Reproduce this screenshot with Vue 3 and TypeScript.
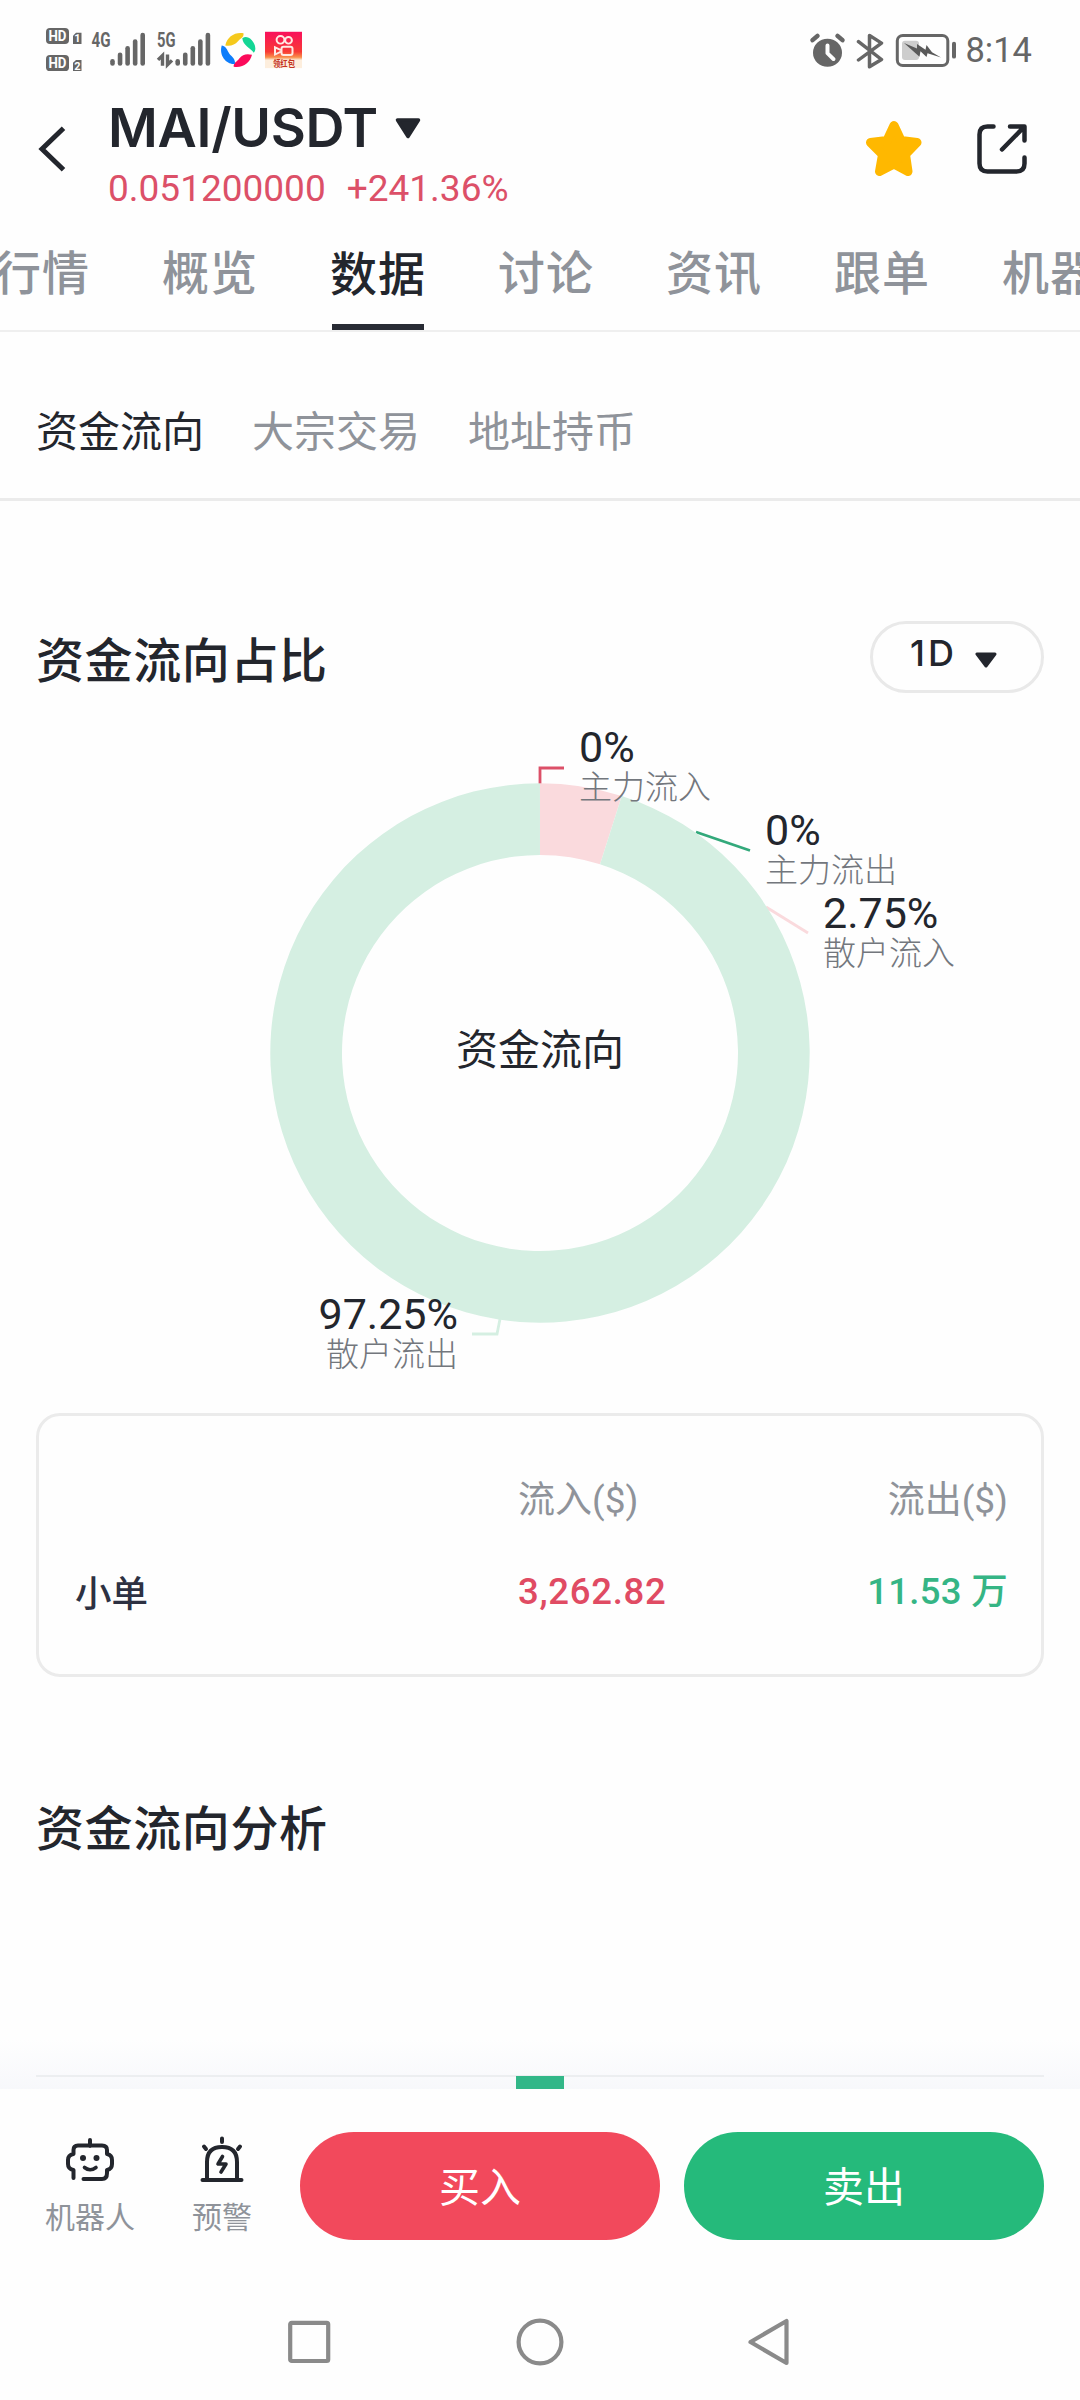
<script setup lang="ts">
interface Slice {
  name: string
  value: string
  x: number
  y: number
  line: string
  color: string
}

const tabs: string[] = ['行情', '概览', '数据', '讨论', '资讯', '跟单', '机器人']
const activeTab = '数据'

const subTabs: string[] = ['资金流向', '大宗交易', '地址持币']
const activeSubTab = '资金流向'

// Chart coordinates are relative to the centre of the ring.
const slices: Slice[] = [
  { name: '主力流入', value: '0%', x: 39, y: -291, line: 'M0 -269V-285H24', color: '#dc5068' },
  { name: '主力流出', value: '0%', x: 225, y: -208, line: 'M156 -221L210 -202.5', color: '#33a97b' },
  { name: '散户流入', value: '2.75%', x: 283, y: -125, line: 'M226 -146L268 -120', color: '#fadadd' },
  { name: '散户流出', value: '97.25%', x: -82, y: 276, line: 'M-40 266L-43 281H-68', color: '#d5efe2' },
]

const outer = 269.7
const inner = 198

function arc(from: number, to: number): string {
  const point = (r: number, deg: number): string => {
    const a = (deg * Math.PI) / 180
    return `${(r * Math.sin(a)).toFixed(2)} ${(-r * Math.cos(a)).toFixed(2)}`
  }
  const large = to - from > 180 ? 1 : 0
  return `M${point(outer, from)}A${outer} ${outer} 0 ${large} 1 ${point(outer, to)}L${point(inner, to)}A${inner} ${inner} 0 ${large} 0 ${point(inner, from)}Z`
}

const bars = [0, 1, 2, 3, 4]
</script>

<template>
  <div class="screen">
    <div class="status">
      <svg class="status-left" width="270" height="46.5" viewBox="44 26 270 48" preserveAspectRatio="none">
        <g fill="#666">
          <rect x="46" y="29" width="23" height="16.5" rx="4" />
          <rect x="46" y="57" width="23" height="16.5" rx="4" />
          <path d="M73 37l3-3h5.500v11.500H73z" />
          <path d="M73 65l3-3h5.500v11.500H73z" />
        </g>
        <g class="hd">
          <text x="57.500" y="42.500" font-size="14.500" textLength="18" lengthAdjust="spacingAndGlyphs">HD</text>
          <text x="57.500" y="70.500" font-size="14.500" textLength="18" lengthAdjust="spacingAndGlyphs">HD</text>
          <text x="77.300" y="44" font-size="11">1</text>
          <text x="77.300" y="72" font-size="11">2</text>
        </g>
        <g class="net">
          <text x="91.500" y="49" textLength="19" lengthAdjust="spacingAndGlyphs">4G</text>
          <text x="157" y="49" textLength="18.500" lengthAdjust="spacingAndGlyphs">5G</text>
        </g>
        <g stroke="#666" stroke-width="4.600" stroke-linecap="round">
          <path v-for="b in bars" :key="b" :d="`M${112.5 + b * 7.55} 65.700V${63.5 - b * 6.8}`" />
          <path v-for="b in bars" :key="'r' + b" :d="`M${177.7 + b * 7.55} 65.700V${63.5 - b * 6.8}`" />
        </g>
        <path d="M158 62l4.500-4.500V68M167.500 56.500V67l4.500-4.500" fill="none" stroke="#666" stroke-width="3.400" />
        <g transform="scale(1 1.033)">
          <path d="M225.300 45.700C227 37 235 32 243.500 33.500C244 38 240.500 38.500 238 41.500C235 45 231 46.500 225.300 45.700Z" fill="#f5c91c" />
          <path d="M242.300 38.500C246.500 35.500 251 38.500 253.300 42.500C255.500 46 256.300 50 253.800 53C250.500 48 243 46 242.300 38.500Z" fill="#14d695" />
          <path d="M252 55C250 63 243 68.500 233.700 67C233.300 63 237 62 239.500 58.500C242.500 54.500 247 53.500 252 55Z" fill="#fb0a5a" />
          <path d="M221.700 45.700C225 46 226.500 48.500 228.500 52.500C230.500 56.500 235.500 58 235 64C228 65.500 218.500 57 221.700 45.700Z" fill="#0d7dfb" />
        </g>
        <defs>
          <linearGradient id="ks" x1="0" y1="0" x2="0" y2="1">
            <stop offset="0" stop-color="#f9105c" />
            <stop offset=".55" stop-color="#f83a35" />
            <stop offset=".7" stop-color="#f9904c" />
            <stop offset=".78" stop-color="#fdeedd" />
            <stop offset="1" stop-color="#fdeedd" />
          </linearGradient>
        </defs>
        <rect x="265" y="33" width="37" height="37.500" fill="url(#ks)" />
        <g fill="none" stroke="#ffeae4" stroke-width="2">
          <circle cx="280.500" cy="41.300" r="3.900" />
          <circle cx="288.500" cy="41.800" r="3.400" />
          <rect x="281.500" y="48.500" width="11" height="8.500" rx="2" />
          <path d="M281 52l-6-3v7.500l6-3" />
        </g>
        <text class="promo" x="284" y="69.300" textLength="22" lengthAdjust="spacingAndGlyphs">领红包</text>
      </svg>
      <div class="status-right">
        <svg width="148" height="38.700" viewBox="808 31 148 40" preserveAspectRatio="none">
          <circle cx="827.500" cy="53.500" r="14.500" fill="#666" />
          <path d="M827.500 46v8l6 6" fill="none" stroke="#fefefe" stroke-width="4" stroke-linecap="round" stroke-linejoin="round" />
          <path d="M812.500 40.500l5-4.500M842.500 40.500l-5-4.500" stroke="#666" stroke-width="4.500" stroke-linecap="round" />
          <path d="M858.500 42l23 18.500-12 7.500V35.500l12 8-23 17.500" fill="none" stroke="#666" stroke-width="3.500" stroke-linecap="round" stroke-linejoin="round" />
          <rect x="897.300" y="35.600" width="50.500" height="31" rx="5.500" fill="none" stroke="#666" stroke-width="3" />
          <rect x="902" y="41" width="17" height="20" rx="3" fill="#cdcdcd" />
          <path d="M904 43.500l13 5.500v-4.500l8.500 6 1-5 5.500 7.500 9 5.500-13.500-4.500-1 4-6-6-1 5.500z" fill="#5a5a5a" />
          <rect x="952" y="42" width="4" height="17.500" rx="2" fill="#666" />
        </svg>
        <span class="clock">8:14</span>
      </div>
    </div>

    <header class="header">
      <svg class="back" width="28" height="50" viewBox="0 0 28 50">
        <path d="M25.500 4.200L4 25l21.500 20.800" fill="none" stroke="#23262d" stroke-width="5" />
      </svg>
      <div class="pair">
        <div class="pair-name">
          <span>MAI/USDT</span>
          <svg width="26" height="21" viewBox="0 0 26 21"><path d="M2.500 2h21L13 18.500z" fill="#23262d" stroke="#23262d" stroke-width="3.500" stroke-linejoin="round" /></svg>
        </div>
        <div class="price"><span>0.051200000</span><span>+241.36%</span></div>
      </div>
      <svg class="star" width="58" height="58" viewBox="0 0 58 58">
        <path d="M29 5.500L36 20.500L52 22.500L40.500 34.500L43 51.500L29 44L14.500 51.500L17.500 34.500L5.500 22.500L22 20.500Z" fill="#ffb800" stroke="#ffb800" stroke-width="9" stroke-linejoin="round" />
      </svg>
      <svg class="share" width="50" height="50" viewBox="0 0 50 50">
        <path d="M16.500 2.500H10.500Q2.500 2.500 2.500 10.500V39.500Q2.500 47.500 10.500 47.500H39.500Q47.500 47.500 47.500 39.500V33.500M33 2.500H47.500V16.500M47 3L25 25.500" fill="none" stroke="#23262d" stroke-width="4.500" stroke-linecap="round" stroke-linejoin="round" />
      </svg>
    </header>

    <nav class="tabs">
      <span v-for="tab in tabs" :key="tab" class="tab" :class="{ active: tab === activeTab }">{{ tab }}</span>
    </nav>

    <nav class="subtabs">
      <span v-for="tab in subTabs" :key="tab" :class="{ active: tab === activeSubTab }">{{ tab }}</span>
    </nav>

    <main class="content">
      <div class="section-head">
        <h2>资金流向占比</h2>
        <button class="range">
          <span>1D</span>
          <svg width="22" height="16" viewBox="0 0 22 16"><path d="M2 2h18l-9 12z" fill="#23262d" stroke="#23262d" stroke-width="3" stroke-linejoin="round" /></svg>
        </button>
      </div>

      <svg class="chart" width="1080" height="720" viewBox="-540 -360 1080 720">
        <path v-for="s in slices" :key="s.name" :d="s.line" fill="none" :stroke="s.color" stroke-width="2.800" />
        <path :d="arc(0, 17.65)" fill="#fadadd" />
        <path :d="arc(17.65, 359.99)" fill="#d5efe2" />
        <text class="ring-title" x="0" y="12">资金流向</text>
        <g v-for="s in slices" :key="s.name" :class="{ end: s.x < 0 }">
          <text class="slice-value" :x="s.x" :y="s.y">{{ s.value }}</text>
          <text class="slice-name" :x="s.x" :y="s.y + 37">{{ s.name }}</text>
        </g>
      </svg>

      <section class="card">
        <div class="row head"><span></span><span>流入($)</span><span>流出($)</span></div>
        <div class="row"><span class="kind">小单</span><span class="in">3,262.82</span><span class="out">11.53 万</span></div>
      </section>

      <h2 class="second">资金流向分析</h2>

      <div class="peek">
        <div class="axis"><i></i></div>
      </div>
    </main>

    <footer class="actions">
      <div class="action robot">
        <svg width="50" height="50" viewBox="0 0 50 50">
          <path d="M25 4v6M8.500 42V34Q3 33 3 28V24Q3 19 8.500 18V14Q8.500 9.500 13 9.500H37Q42 9.500 42 14V18Q47 19 47 24V28Q47 33 42 34V37Q42 43 37 43H18.500" fill="none" stroke="#23262d" stroke-width="4" stroke-linecap="round" stroke-linejoin="round" />
          <circle cx="18" cy="22" r="3" fill="#23262d" />
          <circle cx="31.500" cy="22" r="3" fill="#23262d" />
          <path d="M19.500 31.500Q25 36 31 31.500" fill="none" stroke="#23262d" stroke-width="3.600" stroke-linecap="round" />
        </svg>
        <span>机器人</span>
      </div>
      <div class="action alert">
        <svg width="50" height="50" viewBox="0 0 50 50">
          <path d="M5.500 44H44.500M10 43V26Q10 11 25 11T40 26V43M25 2.500v3.500M7 10.500l2 2.500M43 10.500l-2 2.500" fill="none" stroke="#23262d" stroke-width="4" stroke-linecap="round" stroke-linejoin="round" />
          <path d="M25.500 20.500L21 28H29L24 36" fill="none" stroke="#23262d" stroke-width="3.600" stroke-linecap="round" stroke-linejoin="round" />
        </svg>
        <span>预警</span>
      </div>
      <button class="trade buy">买入</button>
      <button class="trade sell">卖出</button>
    </footer>

    <div class="sysnav">
      <svg width="504" height="52" viewBox="0 0 504 52">
        <g fill="none" stroke="#8a8a8a" stroke-width="4.200" stroke-linejoin="round">
          <rect x="2.200" y="6.800" width="38" height="38.200" rx="1.500" />
          <circle cx="252" cy="26" r="21.400" />
          <path d="M462.500 26L498.500 5V47Z" />
        </g>
      </svg>
    </div>
  </div>
</template>

<style>
body {
  margin: 0;
  background: #fefefe;
}
</style>

<style scoped>
.screen {
  width: 1080px;
  height: 2400px;
  overflow: hidden;
  display: flex;
  flex-direction: column;
  background: #fefefe;
  color: #23262d;
  font-family: Roboto, "Noto Sans CJK SC", sans-serif;
}
.screen svg {
  display: block;
  flex: none;
}
.status {
  height: 96px;
  box-sizing: border-box;
  padding: 25px 48px 0 44px;
  display: flex;
  justify-content: space-between;
  align-items: flex-start;
}
.hd {
  fill: #fefefe;
  font-weight: 700;
  text-anchor: middle;
}
.net {
  fill: #666;
  font-size: 21px;
  font-weight: 700;
}
.promo {
  fill: #c5331f;
  font-size: 9px;
  font-weight: 700;
  text-anchor: middle;
}
.status-right {
  display: flex;
  align-items: center;
  gap: 9.500px;
  padding-top: 5px;
  height: 40px;
}
.clock {
  font-size: 34.500px;
  line-height: 40px;
  color: #666;
}
.header {
  height: 124px;
  display: flex;
  align-items: flex-start;
}
.back {
  margin: 28px 0 0 38px;
}
.pair {
  margin-left: 42px;
  flex: 1;
}
.pair-name {
  display: flex;
  align-items: center;
  height: 64px;
  gap: 17px;
  font: 600 54px/64px Inter, sans-serif;
  letter-spacing: -0.3px;
}
.price {
  display: flex;
  gap: 21px;
  font-size: 37px;
  line-height: 44px;
  margin: 7px 0 0;
  color: #dc5068;
}
.star {
  margin: 24px 54px 0 0;
}
.share {
  margin: 28px 53px 0 0;
}
.tabs {
  height: 112px;
  box-sizing: border-box;
  border-bottom: 2px solid #efefef;
  display: flex;
  gap: 72px;
  overflow: hidden;
}
.tab {
  flex: none;
  width: 96px;
  font-size: 47px;
  letter-spacing: 1px;
  font-weight: 500;
  line-height: 108px;
  white-space: nowrap;
  color: #8f939a;
}
.tab:first-child {
  margin-left: -6px;
}
.tab.active {
  box-sizing: border-box;
  color: #23262d;
  line-height: 110px;
  height: 110px;
  background: linear-gradient(#282b34, #282b34) center bottom / 92px 6px no-repeat;
}
.subtabs {
  height: 169px;
  box-sizing: border-box;
  border-bottom: 3px solid #ebebeb;
  display: flex;
  gap: 48px;
  padding: 71px 36px 0;
  font-size: 42px;
  line-height: 60px;
  color: #8f939a;
}
.subtabs .active {
  color: #23262d;
}
.content {
  flex: none;
  height: 1588px;
  overflow: hidden;
}
.section-head {
  display: flex;
  justify-content: space-between;
  align-items: flex-start;
  padding: 120px 36px 0;
  height: 72px;
}
h2 {
  margin: 0;
  font-size: 48px;
  line-height: 82px;
  letter-spacing: 0.6px;
  font-weight: 500;
}
.range {
  width: 174px;
  height: 72px;
  box-sizing: border-box;
  border: 3px solid #e9e9e9;
  border-radius: 36px;
  background: none;
  padding: 0 0 0 37px;
  display: flex;
  align-items: flex-start;
  gap: 18px;
  color: #23262d;
  font: 500 36px/58px Inter, sans-serif;
  letter-spacing: 3px;
}
.range svg {
  margin-top: 28px;
}
.ring-title {
  font-size: 42px;
  text-anchor: middle;
  fill: #23262d;
}
.slice-value {
  font-size: 43px;
  fill: #23262d;
}
.slice-name {
  font-size: 33px;
  font-weight: 300;
  fill: #73777d;
}
.end text {
  text-anchor: end;
}
.card {
  margin: 0 36px;
  height: 264px;
  box-sizing: border-box;
  border: 3px solid #ebebeb;
  border-radius: 24px;
  padding: 37px 33px 0 36px;
}
.row {
  display: grid;
  grid-template-columns: 443px 1fr auto;
  height: 94px;
  line-height: 96px;
  font-size: 36.500px;
  font-weight: 500;
}
.row.head {
  font-weight: 400;
  font-size: 37px;
  line-height: 96px;
  color: #8f939a;
}
.kind {
  color: #2d3142;
}
.in {
  color: #e04b63;
  letter-spacing: 0.7px;
  line-height: 89px;
}
.out {
  color: #35b585;
  letter-spacing: 0.3px;
  line-height: 90px;
}
.second {
  margin: 112px 36px 0;
}
.peek {
  margin-top: 168px;
  height: 50px;
  padding: 36px 36px 0;
  box-sizing: border-box;
  background: linear-gradient(#fefefe, #f7f8fb);
}
.axis {
  height: 12px;
  border-top: 2px solid #eceef0;
}
.axis i {
  display: block;
  width: 48px;
  height: 13px;
  margin: 0 auto;
  position: relative;
  top: -1px;
  background: #32b788;
}
.actions {
  height: 189px;
  display: flex;
  align-items: flex-start;
  padding: 43px 36px 0;
  box-sizing: border-box;
  background: #fefefe;
}
.action {
  display: flex;
  flex-direction: column;
  align-items: center;
  font-size: 30px;
  line-height: 40px;
  color: #8f939a;
  padding-top: 4px;
  gap: 12px;
}
.robot {
  width: 108px;
}
.alert {
  width: 108px;
  margin: 0 24px;
}
.trade {
  width: 360px;
  height: 108px;
  border: 0;
  border-radius: 54px;
  padding: 0 0 3px;
  color: #fff;
  font: 400 41px/105px "Noto Sans CJK SC", sans-serif;
}
.buy {
  background: #f2495c;
  margin-right: 24px;
}
.sell {
  background: #25ba7b;
}
.sysnav {
  flex: 1;
  padding: 38px 0 0 288px;
}
</style>
